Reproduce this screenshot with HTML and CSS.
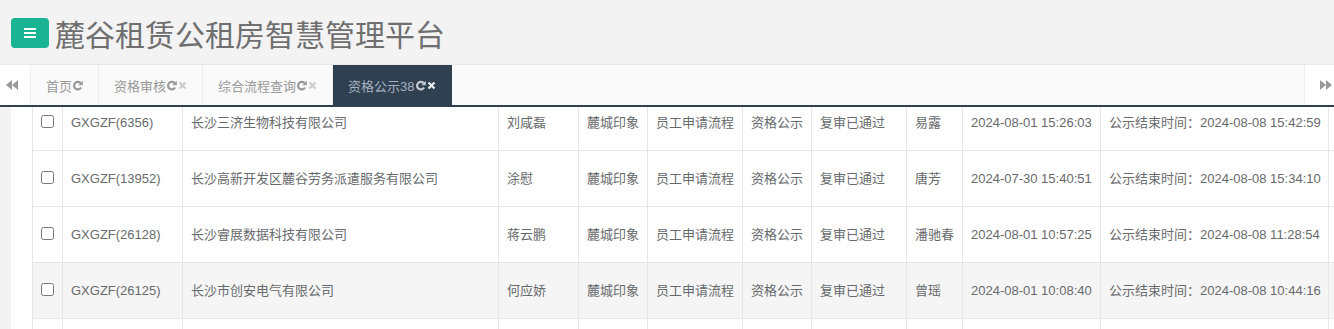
FILE: index.html
```html
<!DOCTYPE html>
<html lang="zh-CN">
<head>
<meta charset="utf-8">
<title>麓谷租赁公租房智慧管理平台</title>
<link rel="stylesheet" href="styles.css">
</head>
<body>
<header class="header">
  <button class="menu-btn" type="button" aria-label="menu">
    <svg width="12" height="10" viewBox="0 0 12 10"><rect x="0" y="0" width="12" height="2" fill="#fff"/><rect x="0" y="4" width="12" height="2" fill="#fff"/><rect x="0" y="8" width="12" height="2" fill="#fff"/></svg>
  </button>
  <h1 class="title">麓谷租赁公租房智慧管理平台</h1>
</header>
<nav class="tabbar">
  <button class="tab-arrow arrow-left" type="button" aria-label="prev">
    <svg width="12" height="10" viewBox="0 0 12 10"><polygon points="6,0 6,10 0,5" fill="#999"/><polygon points="12,0 12,10 6,5" fill="#999"/></svg>
  </button>
  <div class="tabs">
    <a class="tab">首页<svg class="ico-refresh" viewBox="0 0 12 12"><path d="M9.6 3.6 A4.1 4.1 0 1 0 9.9 8.2" fill="none" stroke="currentColor" stroke-width="2.4"/><polygon points="11.8,0.8 11.8,5.8 7,5.8" fill="currentColor"/></svg></a>
    <a class="tab">资格审核<svg class="ico-refresh" viewBox="0 0 12 12"><path d="M9.6 3.6 A4.1 4.1 0 1 0 9.9 8.2" fill="none" stroke="currentColor" stroke-width="2.4"/><polygon points="11.8,0.8 11.8,5.8 7,5.8" fill="currentColor"/></svg><svg class="ico-close" viewBox="0 0 9 9"><path d="M1.5 1.5 L7.5 7.5 M7.5 1.5 L1.5 7.5" stroke="currentColor" stroke-width="2.3"/></svg></a>
    <a class="tab">综合流程查询<svg class="ico-refresh" viewBox="0 0 12 12"><path d="M9.6 3.6 A4.1 4.1 0 1 0 9.9 8.2" fill="none" stroke="currentColor" stroke-width="2.4"/><polygon points="11.8,0.8 11.8,5.8 7,5.8" fill="currentColor"/></svg><svg class="ico-close" viewBox="0 0 9 9"><path d="M1.5 1.5 L7.5 7.5 M7.5 1.5 L1.5 7.5" stroke="currentColor" stroke-width="2.3"/></svg></a>
    <a class="tab active">资格公示38<svg class="ico-refresh" viewBox="0 0 12 12"><path d="M9.6 3.6 A4.1 4.1 0 1 0 9.9 8.2" fill="none" stroke="currentColor" stroke-width="2.4"/><polygon points="11.8,0.8 11.8,5.8 7,5.8" fill="currentColor"/></svg><svg class="ico-close" viewBox="0 0 9 9"><path d="M1.5 1.5 L7.5 7.5 M7.5 1.5 L1.5 7.5" stroke="currentColor" stroke-width="2.3"/></svg></a>
  </div>
  <button class="tab-arrow arrow-right" type="button" aria-label="next">
    <svg width="12" height="10" viewBox="0 0 12 10"><polygon points="0,0 0,10 6,5" fill="#999"/><polygon points="6,0 6,10 12,5" fill="#999"/></svg>
  </button>
</nav>
<main class="content">
  <div class="panel">
    <table class="grid">
      <colgroup>
        <col class="c-chk"><col class="c-no"><col class="c-company"><col class="c-name"><col class="c-project"><col class="c-flow"><col class="c-step"><col class="c-status"><col class="c-user"><col class="c-time"><col class="c-end"><col class="c-extra">
      </colgroup>
      <tbody>
        <tr>
          <td class="chk"><input type="checkbox"></td>
          <td>GXGZF(6356)</td><td>长沙三济生物科技有限公司</td><td>刘咸磊</td><td>麓城印象</td><td>员工申请流程</td><td>资格公示</td><td>复审已通过</td><td>易露</td><td>2024-08-01 15:26:03</td><td>公示结束时间：2024-08-08 15:42:59</td><td></td>
        </tr>
        <tr>
          <td class="chk"><input type="checkbox"></td>
          <td>GXGZF(13952)</td><td>长沙高新开发区麓谷劳务派遣服务有限公司</td><td>涂慰</td><td>麓城印象</td><td>员工申请流程</td><td>资格公示</td><td>复审已通过</td><td>唐芳</td><td>2024-07-30 15:40:51</td><td>公示结束时间：2024-08-08 15:34:10</td><td></td>
        </tr>
        <tr>
          <td class="chk"><input type="checkbox"></td>
          <td>GXGZF(26128)</td><td>长沙睿展数据科技有限公司</td><td>蒋云鹏</td><td>麓城印象</td><td>员工申请流程</td><td>资格公示</td><td>复审已通过</td><td>潘驰春</td><td>2024-08-01 10:57:25</td><td>公示结束时间：2024-08-08 11:28:54</td><td></td>
        </tr>
        <tr class="hover">
          <td class="chk"><input type="checkbox"></td>
          <td>GXGZF(26125)</td><td>长沙市创安电气有限公司</td><td>何应娇</td><td>麓城印象</td><td>员工申请流程</td><td>资格公示</td><td>复审已通过</td><td>曾瑶</td><td>2024-08-01 10:08:40</td><td>公示结束时间：2024-08-08 10:44:16</td><td></td>
        </tr>
        <tr>
          <td class="chk"></td><td></td><td></td><td></td><td></td><td></td><td></td><td></td><td></td><td></td><td></td><td></td>
        </tr>
      </tbody>
    </table>
  </div>
</main>
</body>
</html>
```
FILE: styles.css
```css
* { box-sizing: border-box; }
html, body {
  margin: 0;
  padding: 0;
  height: 100%;
  overflow: hidden;
  background: #f3f3f4;
  font-family: "Liberation Sans", Arial, "Noto Sans CJK SC", sans-serif;
  font-size: 13px;
  color: #676a6c;
}
.header {
  height: 64px;
  display: flex;
  align-items: center;
  padding: 2px 0 0 11px;
  background: #f3f3f4;
}
.menu-btn {
  width: 38px;
  height: 30px;
  border: none;
  border-radius: 4px;
  background: #1ab394;
  display: flex;
  align-items: center;
  justify-content: center;
  padding: 0;
  margin: 0;
}
.title {
  margin: 0 0 0 6px;
  font-family: "Noto Sans CJK SC", sans-serif;
  font-weight: 400;
  font-size: 30px;
  line-height: 34px;
  color: #6f6f6f;
}
.tabbar {
  display: flex;
  height: 43px;
  border-top: 1px solid #e7eaec;
  border-bottom: 2px solid #2f4050;
  background: #fafafa;
}
.tab-arrow {
  width: 31px;
  height: 40px;
  border: none;
  padding: 0;
  margin: 0;
  background: #fff;
  display: flex;
  align-items: center;
  justify-content: center;
}
.arrow-left { border-right: 1px solid #eee; padding-right: 6px; }
.arrow-right { width: 30px; border-left: 1px solid #eee; padding-left: 12px; }
.tabs {
  flex: 1;
  display: flex;
  overflow: hidden;
}
.tab {
  display: flex;
  align-items: center;
  height: 40px;
  padding: 0 15px 0 15px;
  border-right: 1px solid #eee;
  color: #999;
  white-space: nowrap;
  font-family: "Liberation Sans", Arial, "Noto Sans CJK SC", sans-serif;
  font-size: 13px;
}
.tab:first-child { padding-left: 15px; }
.tab .ico-refresh { width: 11px; height: 11px; color: #999; margin-left: 0; }
.tab .ico-close { width: 9px; height: 9px; color: #ccc; margin-left: 1px; }
.tab.active {
  background: #2f4050;
  color: #a7b1c2;
  border-right: none;
  padding-right: 16px;
}
.tab.active .ico-refresh { color: #c5cbd6; }
.tab.active .ico-close { color: #e8ebf0; }
.content {
  height: 222px;
  padding-left: 11px;
  background: #f3f3f4;
  overflow: hidden;
}
.panel {
  height: 100%;
  background: #fff;
  padding-left: 21px;
  overflow: hidden;
}
.grid {
  border-collapse: collapse;
  table-layout: fixed;
  width: 1416px;
  margin-top: -13px;
}
.grid td {
  height: 56px;
  padding: 8px;
  border: 1px solid #e7e7e7;
  vertical-align: middle;
  white-space: nowrap;
  overflow: hidden;
  color: #676a6c;
  line-height: 18px;
}
.grid tr.hover td { background: #f5f5f5; }
.grid td.chk { text-align: center; padding: 0; }
.grid td.chk input { margin: 0; width: 13px; height: 13px; position: relative; top: -2px; vertical-align: middle; }
.c-chk { width: 30px; }
.c-no { width: 120px; }
.c-company { width: 316px; }
.c-name { width: 80px; }
.c-project { width: 69px; }
.c-flow { width: 95px; }
.c-step { width: 69px; }
.c-status { width: 95px; }
.c-user { width: 56px; }
.c-time { width: 138px; }
.c-end { width: 228px; }
.c-extra { width: 120px; }
```
